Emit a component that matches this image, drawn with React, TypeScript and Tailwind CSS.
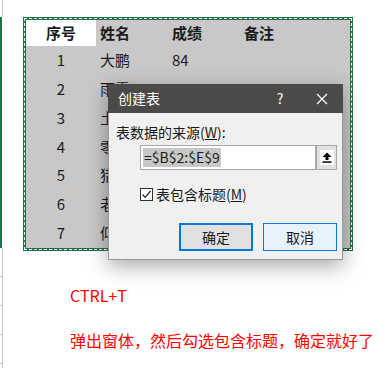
const rows = [
  { id: 1, name: "大鹏", score: "84" },
  { id: 2, name: "雨露", score: "" },
  { id: 3, name: "土豆", score: "" },
  { id: 4, name: "零点", score: "" },
  { id: 5, name: "猎人", score: "" },
  { id: 6, name: "老王", score: "" },
  { id: 7, name: "仰望", score: "" },
]

function RowHeaderStrip() {
  return (
    <div className="flex flex-col w-[3px] shrink-0">
      <div className="h-[17px] border-r border-[#c6c6c6]" />
      <div className="h-[231px] w-[2px] bg-[#217346]" />
      {[0, 1, 2, 3].map((i) => (
        <div key={i} className="h-[29px] border-r border-b border-[#c6c6c6]" />
      ))}
      <div className="flex-1 border-r border-[#c6c6c6]" />
    </div>
  )
}

function CreateTableDialog() {
  return (
    <div className="absolute left-[108px] top-[84px] w-[235px] h-[176px] flex flex-col bg-[#f0f0f0] border border-t-0 border-[#9a9a9a] shadow-[0_6px_20px_rgba(0,0,0,0.35)]">
      <div className="h-[29px] -mx-px bg-[#4b4a48] text-white text-[14px] flex items-center pl-[10px]">
        <span className="flex-1">创建表</span>
        <span className="w-[20px] text-center text-[14px] mr-[26px]">?</span>
        <svg width="12" height="12" viewBox="0 0 12 12" className="mr-[15px]">
          <path d="M1 1 L11 11 M11 1 L1 11" stroke="white" strokeWidth="1.2" />
        </svg>
      </div>
      <div className="pl-[7px] pt-[9px] text-[14px] leading-[20px] text-[#1a1a1a]">
        表数据的来源(<span className="underline">W</span>):
      </div>
      <div className="flex ml-[31px] mt-[3px] h-[25px]">
        <div className="w-[176px] border border-[#a8a8a8] bg-white flex items-center pl-[2px]">
          <span className="bg-[#c8c8c8] text-[14px] leading-[19px] px-px text-[#1a1a1a]">=$B$2:$E$9</span>
        </div>
        <div className="w-[21px] border border-[#a8a8a8] bg-[#e1e1e1] flex items-center justify-center">
          <div className="w-[14px] h-[15px] bg-white flex items-center justify-center">
            <svg width="10" height="11" viewBox="0 0 10 11">
              <path d="M5 0.5 L9.5 5 L6.5 5 L6.5 8 L3.5 8 L3.5 5 L0.5 5 Z" fill="black" />
              <rect x="0.5" y="9.3" width="9" height="1.5" fill="black" />
            </svg>
          </div>
        </div>
      </div>
      <div className="flex items-center ml-[31px] mt-[14px]">
        <div className="w-[13px] h-[13px] border border-[#333] bg-white flex items-center justify-center">
          <svg width="11" height="11" viewBox="0 0 11 11">
            <path d="M1.5 5.5 L4.2 8.3 L9.6 2" stroke="#222" strokeWidth="1.2" fill="none" />
          </svg>
        </div>
        <span className="ml-[3px] text-[14px] leading-[20px] text-[#1a1a1a]">
          表包含标题(<span className="underline">M</span>)
        </span>
      </div>
      <div className="flex justify-end gap-[10px] pr-[5px] mt-[19px]">
        <button className="w-[74px] h-[28px] border-2 border-[#0078d7] bg-[#e1e1e1] text-[14px] text-[#1a1a1a]">
          确定
        </button>
        <button className="w-[74px] h-[28px] border border-[#0078d7] bg-[#e5f1fb] text-[14px] text-[#1a1a1a]">
          取消
        </button>
      </div>
    </div>
  )
}

export default function App() {
  return (
    <div className="relative w-[391px] h-[368px] overflow-hidden bg-white font-['Noto_Sans_CJK_SC',sans-serif] text-[#1a1a1a]">
      <div className="flex h-full">
        <RowHeaderStrip />
        <div className="flex flex-col">
          <div className="ml-[20px] mt-[17px] w-[330px] bg-[#217346] p-px">
            <div className="border border-dashed border-white bg-[#217346] p-px">
              <div className="bg-[#c8c8c8] text-[15px]">
                <div className="grid grid-cols-[70px_72px_72px_1fr] h-[26px] items-center font-bold">
                  <div className="h-full bg-white flex items-center justify-center">序号</div>
                  <div className="pl-[4px]">姓名</div>
                  <div className="pl-[4px]">成绩</div>
                  <div className="pl-[4px]">备注</div>
                </div>
                {rows.map((r) => (
                  <div key={r.id} className="grid grid-cols-[70px_72px_72px_1fr] h-[28.8px] items-center">
                    <div className="text-center">{r.id}</div>
                    <div className="pl-[4px]">{r.name}</div>
                    <div className="pl-[4px]">{r.score}</div>
                    <div />
                  </div>
                ))}
              </div>
            </div>
          </div>
          <div className="ml-[67px] mt-[34px] text-[16px] leading-[20px] text-[#ff0000]">CTRL+T</div>
          <div className="ml-[67px] mt-[25px] text-[16px] leading-[20px] text-[#ff0000]">
            弹出窗体，然后勾选包含标题，确定就好了
          </div>
        </div>
      </div>
      <CreateTableDialog />
    </div>
  )
}
